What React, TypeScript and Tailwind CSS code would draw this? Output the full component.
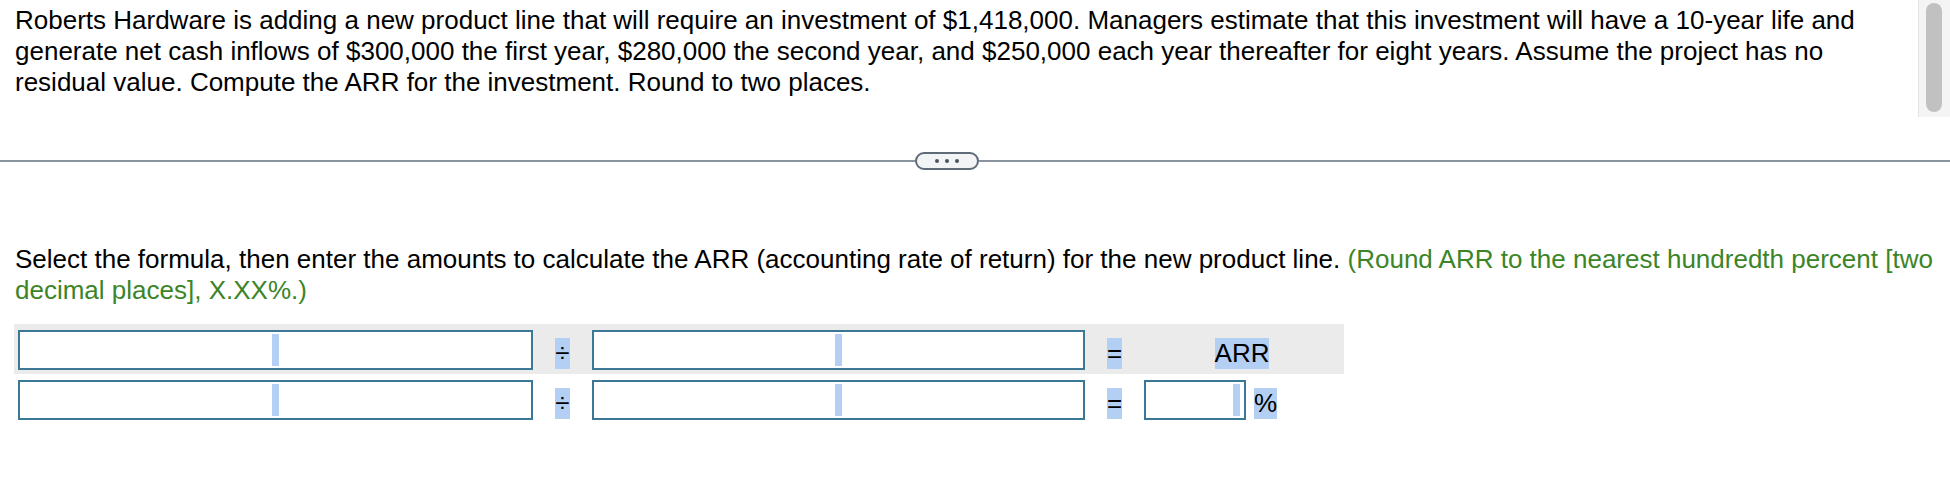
import React from "react";

const Field = ({ w, align = "center" }: { w: string; align?: "center" | "right" }) => (
  <div
    className={`${w} h-[40px] mt-[6px] border-2 border-[#3a7896] bg-white flex items-start pt-[2px] ${
      align === "center" ? "justify-center" : "justify-end pr-[4px]"
    }`}
  >
    <span className="block w-[7px] h-[32px] bg-[#b4cff4]" />
  </div>
);

const Sym = ({ children }: { children: React.ReactNode }) => (
  <span className="inline-block mt-[14px] h-[31px] leading-[31px] bg-[#b4cff4] text-black">{children}</span>
);

export default function App() {
  return (
    <div className="w-[1950px] h-[482px] overflow-hidden bg-white text-black text-[26px] font-['Liberation_Sans',Arial,sans-serif]">
      <div className="flex h-[117px]">
        <div className="flex-1 pl-[15px] pr-[10px] pt-[5px] leading-[31px]">
          <p>
            Roberts Hardware is adding a new product line that will require an investment of $1,418,000. Managers
            estimate that this investment will have a 10-year life and generate net cash inflows of $300,000 the first
            year, $280,000 the second year, and $250,000 each year thereafter for eight years. Assume the project has no
            residual value. Compute the ARR for the investment. Round to two places.
          </p>
        </div>
        <div className="w-[32px] bg-[#f4f4f4] border-l border-[#e4e4e4] pt-[3px] pl-[7px]">
          <div className="w-[16px] h-[109px] rounded-full bg-[#c1c1c1]" />
        </div>
      </div>

      <div className="mt-[35px] h-[18px] flex items-center">
        <div className="w-[915px] h-[2px] bg-[#8a94a1]" />
        <div className="w-[64px] h-[18px] rounded-full border-2 border-[#5f6b78] bg-[#f2f4f6] flex items-center justify-center gap-[6px]">
          <span className="block w-[4px] h-[4px] rounded-full bg-[#4a5561]" />
          <span className="block w-[4px] h-[4px] rounded-full bg-[#4a5561]" />
          <span className="block w-[4px] h-[4px] rounded-full bg-[#4a5561]" />
        </div>
        <div className="flex-1 h-[2px] bg-[#8a94a1]" />
      </div>

      <p className="mt-[74px] pl-[15px] pr-[15px] leading-[31px]">
        Select the formula, then enter the amounts to calculate the ARR (accounting rate of return) for the new product
        line.{" "}
        <span className="text-[#3b8527]">
          (Round ARR to the nearest hundredth percent [two decimal places], X.XX%.)
        </span>
      </p>

      <div className="mt-[18px] ml-[14px] w-[1330px]">
        <div className="h-[50px] bg-[#ebebeb] flex pl-[4px]">
          <Field w="w-[515px]" />
          <div className="w-[59px] flex justify-center">
            <Sym>÷</Sym>
          </div>
          <Field w="w-[493px]" />
          <div className="w-[59px] flex justify-center">
            <Sym>=</Sym>
          </div>
          <div className="w-[196px] flex justify-center">
            <Sym>ARR</Sym>
          </div>
        </div>
        <div className="h-[50px] flex pl-[4px]">
          <Field w="w-[515px]" />
          <div className="w-[59px] flex justify-center">
            <Sym>÷</Sym>
          </div>
          <Field w="w-[493px]" />
          <div className="w-[59px] flex justify-center">
            <Sym>=</Sym>
          </div>
          <div className="w-[196px] flex">
            <Field w="w-[102px]" align="right" />
            <div className="ml-[8px]">
              <Sym>%</Sym>
            </div>
          </div>
        </div>
      </div>
    </div>
  );
}
